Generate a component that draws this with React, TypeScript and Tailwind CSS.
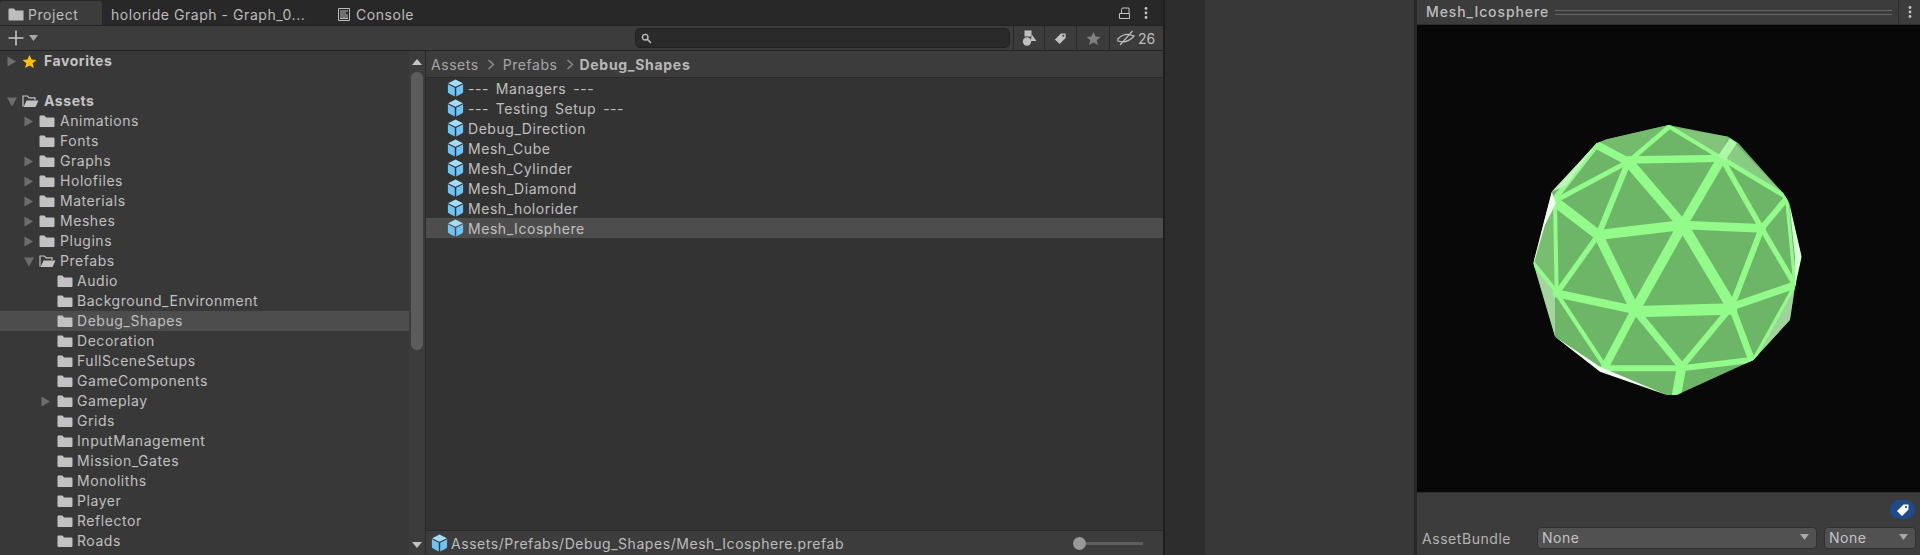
import React from "react";

const tree = [
  { name: "Favorites", depth: 0, arrow: "right", icon: "star", bold: true },
  { name: "", depth: 0, arrow: "", icon: "" },
  { name: "Assets", depth: 0, arrow: "down", icon: "open", bold: true },
  { name: "Animations", depth: 1, arrow: "right", icon: "folder" },
  { name: "Fonts", depth: 1, arrow: "", icon: "folder" },
  { name: "Graphs", depth: 1, arrow: "right", icon: "folder" },
  { name: "Holofiles", depth: 1, arrow: "right", icon: "folder" },
  { name: "Materials", depth: 1, arrow: "right", icon: "folder" },
  { name: "Meshes", depth: 1, arrow: "right", icon: "folder" },
  { name: "Plugins", depth: 1, arrow: "right", icon: "folder" },
  { name: "Prefabs", depth: 1, arrow: "down", icon: "open" },
  { name: "Audio", depth: 2, arrow: "", icon: "folder" },
  { name: "Background_Environment", depth: 2, arrow: "", icon: "folder" },
  { name: "Debug_Shapes", depth: 2, arrow: "", icon: "folder", selected: true },
  { name: "Decoration", depth: 2, arrow: "", icon: "folder" },
  { name: "FullSceneSetups", depth: 2, arrow: "", icon: "folder" },
  { name: "GameComponents", depth: 2, arrow: "", icon: "folder" },
  { name: "Gameplay", depth: 2, arrow: "right", icon: "folder" },
  { name: "Grids", depth: 2, arrow: "", icon: "folder" },
  { name: "InputManagement", depth: 2, arrow: "", icon: "folder" },
  { name: "Mission_Gates", depth: 2, arrow: "", icon: "folder" },
  { name: "Monoliths", depth: 2, arrow: "", icon: "folder" },
  { name: "Player", depth: 2, arrow: "", icon: "folder" },
  { name: "Reflector", depth: 2, arrow: "", icon: "folder" },
  { name: "Roads", depth: 2, arrow: "", icon: "folder" },
];

const prefabs = [
  "--- Managers ---",
  "--- Testing Setup ---",
  "Debug_Direction",
  "Mesh_Cube",
  "Mesh_Cylinder",
  "Mesh_Diamond",
  "Mesh_holorider",
  "Mesh_Icosphere",
];

const depthPad = ["pl-[7px]", "pl-[24px]", "pl-[41px]"];
const arrowCol = ["w-[15px]", "w-[15px]", "w-[16px]"];
const iconCol = ["w-[22px]", "w-[21px]", "w-[20px]"];

const FolderIcon = () => (
  <svg width="16" height="14" viewBox="0 0 16 14" className="shrink-0">
    <path d="M0.5 2.5 Q0.5 1.5 1.5 1.5 H5.5 L7 3.5 H14.5 Q15.5 3.5 15.5 4.5 V12 Q15.5 13 14.5 13 H1.5 Q0.5 13 0.5 12 Z" fill="#c2c2c2" />
  </svg>
);

const OpenFolderIcon = () => (
  <svg width="17" height="14" viewBox="0 0 17 14" className="shrink-0">
    <path d="M1 12.5 V2 H5.5 L7 3.8 H13 V6" fill="none" stroke="#c2c2c2" strokeWidth="1.2" />
    <path d="M1.5 13 L4.5 6.5 H16.5 L13.5 13 Z" fill="#c2c2c2" />
  </svg>
);

const StarIcon = ({ color = "#ffc107", size = 15 }: { color?: string; size?: number }) => (
  <svg width={size} height={size} viewBox="0 0 16 16" className="shrink-0">
    <path d="M8 1 L10.2 5.8 L15.4 6.3 L11.4 9.8 L12.7 15 L8 12.2 L3.3 15 L4.6 9.8 L0.6 6.3 L5.8 5.8 Z" fill={color} />
  </svg>
);

const CubeIcon = () => (
  <svg width="17" height="18" viewBox="0 0 16 17" className="shrink-0">
    <path d="M8 0.5 L15 4 L8 7.3 L1 4 Z" fill="#a5dcfb" />
    <path d="M0.8 5 L7.3 8.2 V16.5 L2 13.8 Q0.8 13.2 0.8 12 Z" fill="#6cc5f6" />
    <path d="M15.2 5 L8.7 8.2 V16.5 L14 13.8 Q15.2 13.2 15.2 12 Z" fill="#6cc5f6" />
  </svg>
);

const Arrow = ({ dir }: { dir: string }) => (
  <svg width="10" height="11" viewBox="0 0 10 11" className="shrink-0">
    {dir === "right" ? (
      <path d="M0.5 0.5 L9 5.5 L0.5 10.5 Z" fill="#6d6d6d" />
    ) : (
      <path d="M0 1.5 H10 L5 10.5 Z" fill="#6d6d6d" />
    )}
  </svg>
);

const TreeRow = ({ row }: { row: (typeof tree)[number] }) => (
  <div
    className={`flex h-5 shrink-0 items-center ${depthPad[row.depth]} ${row.selected ? "bg-[#4d4d4d]" : ""}`}
  >
    <div className={`flex shrink-0 ${arrowCol[row.depth]}`}>{row.arrow && <Arrow dir={row.arrow} />}</div>
    <div className={`flex shrink-0 ${iconCol[row.depth]}`}>
      {row.icon === "folder" && <FolderIcon />}
      {row.icon === "open" && <OpenFolderIcon />}
      {row.icon === "star" && <StarIcon />}
    </div>
    <span className={`pb-[2px] ${row.bold ? "font-bold text-[#c4c4c4]" : "text-[#c0c0c0]"}`}>{row.name}</span>
  </div>
);

const Sphere = () => {
  const edges: [number, number, number, number, number][] = [
    [508, 50, 385, 155, 14],
    [290, 105, 385, 155, 24],
    [385, 150, 665, 145, 22],
    [508, 50, 665, 145, 12],
    [385, 155, 170, 270, 15],
    [385, 155, 295, 375, 18],
    [385, 155, 548, 345, 30],
    [665, 145, 548, 345, 28],
    [665, 145, 785, 355, 16],
    [665, 145, 860, 262, 14],
    [860, 265, 785, 355, 18],
    [165, 275, 295, 375, 30],
    [295, 375, 548, 345, 30],
    [548, 345, 785, 355, 26],
    [785, 355, 885, 525, 16],
    [785, 355, 695, 590, 18],
    [170, 550, 295, 375, 16],
    [295, 375, 405, 600, 28],
    [548, 345, 405, 600, 30],
    [548, 345, 695, 590, 32],
    [170, 550, 405, 600, 24],
    [405, 605, 695, 597, 34],
    [695, 590, 885, 525, 22],
    [695, 590, 755, 750, 20],
    [695, 590, 545, 770, 18],
    [405, 600, 545, 770, 22],
    [405, 600, 315, 770, 24],
    [170, 550, 315, 770, 13],
    [310, 775, 545, 775, 18],
    [545, 775, 755, 750, 18],
    [545, 770, 530, 852, 28],
    [165, 270, 170, 550, 12],
    [290, 105, 165, 265, 16],
    [860, 265, 885, 525, 10],
    [100, 460, 170, 545, 12],
    [885, 525, 760, 750, 10],
  ];
  return (
    <svg width="330" height="300" viewBox="0 0 990 900" className="mt-[3px] mr-[7px] shrink-0">
      <defs>
        <clipPath id="hull">
          <polygon points="505,45 685,80 715,100 850,250 868,280 905,440 885,530 870,630 760,750 530,855 500,855 300,785 165,680 100,460 155,245 290,100 320,88" />
        </clipPath>
      </defs>
      <g clipPath="url(#hull)">
        <rect width="990" height="900" fill="#6db567" />
        <polygon points="290,100 320,88 505,45 385,150" fill="#74bb6d" />
        <polygon points="508,50 685,80 660,135" fill="#82c47c" />
        <polygon points="700,95 850,250 672,145" fill="#88cc82" />
        <polygon points="100,460 165,545 165,680" fill="#a3d69e" />
        <polygon points="885,530 870,630 760,750" fill="#9fd39a" />
        <polygon points="165,270 170,545 100,450" fill="#78be71" />
        {edges.map((e, i) => (
          <line key={i} x1={e[0]} y1={e[1]} x2={e[2]} y2={e[3]} stroke="#92fb8a" strokeWidth={e[4]} strokeLinecap="round" />
        ))}
        <line x1="665" y1="145" x2="700" y2="92" stroke="#aef7a7" strokeWidth="26" />
        <polygon points="155,245 100,445 100,465 135,345 168,280" fill="#f0fff0" />
        <polygon points="165,680 300,785 500,855 300,770" fill="#f5fff4" />
        <polygon points="868,280 905,440 885,530 885,440" fill="#dcfbd8" />
        <polygon points="155,245 290,100 200,225" fill="#bff5ba" />
      </g>
    </svg>
  );
};

const DropdownArrow = () => (
  <svg width="9" height="6" viewBox="0 0 9 6" className="shrink-0">
    <path d="M0 0 H9 L4.5 6 Z" fill="#a8a8a8" />
  </svg>
);

const TagIcon = ({ color, size = 13 }: { color: string; size?: number }) => (
  <svg width={size} height={size} viewBox="0 0 14 14" className="shrink-0">
    <path fillRule="evenodd" d="M1 8 L7.5 1.5 L12.5 1.5 L12.5 6.5 L6 13 Z M10 3 A1 1 0 1 0 10.01 3 Z" fill={color} />
  </svg>
);

const Dots = () => (
  <svg width="4" height="12" viewBox="0 0 4 12">
    <circle cx="2" cy="1.5" r="1.4" fill="#c4c4c4" />
    <circle cx="2" cy="6" r="1.4" fill="#c4c4c4" />
    <circle cx="2" cy="10.5" r="1.4" fill="#c4c4c4" />
  </svg>
);

const Chevron = () => (
  <svg width="8" height="11" viewBox="0 0 8 11" className="shrink-0">
    <path d="M1.5 1 L6.5 5.5 L1.5 10" fill="none" stroke="#8f8f8f" strokeWidth="1.4" />
  </svg>
);

const Select = ({ className }: { className: string }) => (
  <div
    className={`flex h-[22px] shrink-0 items-center justify-between rounded-[4px] border border-[#303030] bg-[#515151] pr-[7px] pb-[2px] pl-[4px] text-[#c4c4c4] ${className}`}
  >
    None
    <DropdownArrow />
  </div>
);

export default function App() {
  return (
    <div className="flex h-[555px] w-[1920px] overflow-hidden bg-[#383838] font-['Inter',sans-serif] text-[14px] tracking-[0.55px] text-[#c0c0c0]">
      {/* project window */}
      <div className="flex w-[1165px] shrink-0 flex-col border-r-2 border-[#1f1f1f]">
        <div className="flex h-[26px] shrink-0 items-end border-b border-[#232323] bg-[#282828] pt-[2px] text-[#bdbdbd]">
          <div className="flex h-[24px] w-[102px] items-center gap-[4px] rounded-t-[3px] bg-[#3c3c3c] pt-[2px] pl-2">
            <svg width="16" height="13" viewBox="0 0 16 13" className="shrink-0">
              <path d="M0.5 1.5 Q0.5 0.5 1.5 0.5 H6 L7.5 2.5 H15.5 V12.5 H1.5 Q0.5 12.5 0.5 11.5 Z" fill="#bdbdbd" />
            </svg>
            Project
          </div>
          <div className="flex h-[24px] w-[236px] items-center pt-[2px] pl-[9px]">holoride Graph - Graph_0...</div>
          <div className="flex h-[24px] items-center gap-[6px] pt-[2px]">
            <svg width="12" height="13" viewBox="0 0 12 13" className="shrink-0">
              <path d="M0.5 0.5 H11.5 V12.5 H0.5 Z" fill="none" stroke="#bdbdbd" />
              <path d="M2 3 H10 M2 5 H8 M2 7 H10 M2 9 H10 M2 10.5 H10" stroke="#bdbdbd" />
            </svg>
            Console
          </div>
          <div className="ml-auto flex h-[24px] items-center gap-[14px] pr-[15px]">
            <svg width="11" height="12" viewBox="0 0 11 12">
              <path d="M0.5 6.5 H10.5 V11.5 H0.5 Z M2.5 6 V2.5 Q2.5 1 4 1 H10 V6" fill="none" stroke="#c4c4c4" />
            </svg>
            <Dots />
          </div>
        </div>

        <div className="flex h-[25px] shrink-0 items-center border-b border-[#232323] bg-[#3c3c3c]">
          <div className="flex items-center gap-[5px] pl-[8px]">
            <svg width="16" height="16" viewBox="0 0 16 16">
              <path d="M8 0.5 V15.5 M0.5 8 H15.5" stroke="#c4c4c4" strokeWidth="1.6" />
            </svg>
            <DropdownArrow />
          </div>
          <div className="ml-[597px] flex h-[20px] w-[375px] items-center rounded-[5px] border border-[#212121] bg-[#2a2a2a] pl-[5px]">
            <svg width="11" height="11" viewBox="0 0 11 11">
              <circle cx="4.2" cy="4.2" r="2.8" fill="none" stroke="#bdbdbd" strokeWidth="1.4" />
              <path d="M6.5 6.5 L10 10" stroke="#bdbdbd" strokeWidth="1.6" />
            </svg>
          </div>
          <div className="ml-[3px] flex h-full w-[32px] items-center justify-center border-x border-[#2a2a2a]">
            <svg width="15" height="16" viewBox="0 0 15 16">
              <rect x="2.5" y="0.5" width="7" height="6" fill="#c0c0c0" />
              <circle cx="5" cy="11.5" r="4.2" fill="#c0c0c0" />
              <path d="M9.8 4.5 L14.5 11 H8.7 Z" fill="#c0c0c0" />
            </svg>
          </div>
          <div className="flex h-full w-[32px] items-center justify-center border-r border-[#2a2a2a]">
            <TagIcon color="#c0c0c0" />
          </div>
          <div className="flex h-full w-[33px] items-center justify-center border-r border-[#2a2a2a]">
            <StarIcon color="#808080" />
          </div>
          <div className="flex h-full flex-1 items-center gap-[3px] pl-[7px] tracking-normal text-[#bdbdbd]">
            <svg width="18" height="16" viewBox="0 0 18 16">
              <path d="M0.8 9 Q8 1.5 17 6 Q10 14 0.8 11 Z" fill="none" stroke="#bdbdbd" strokeWidth="1.2" />
              <path d="M3 15 L15.5 1" stroke="#bdbdbd" strokeWidth="1.2" />
            </svg>
            26
          </div>
        </div>

        <div className="flex min-h-0 flex-1">
          {/* folder tree */}
          <div className="flex w-[409px] shrink-0 flex-col overflow-hidden bg-[#383838]">
            {tree.map((row, i) => (
              <TreeRow key={i} row={row} />
            ))}
          </div>
          <div className="flex w-[17px] shrink-0 flex-col items-center border-r border-[#2a2a2a] bg-[#3c3c3c] pr-[1px]">
            <svg width="10" height="6" viewBox="0 0 10 6" className="mt-[8px] shrink-0">
              <path d="M5 0 L10 6 H0 Z" fill="#c4c4c4" />
            </svg>
            <div className="mt-[7px] h-[278px] w-[12px] shrink-0 rounded-[6px] bg-[#5c5c5c]" />
            <svg width="10" height="6" viewBox="0 0 10 6" className="mt-auto mb-[7px] shrink-0">
              <path d="M0 0 H10 L5 6 Z" fill="#c4c4c4" />
            </svg>
          </div>

          {/* asset list */}
          <div className="flex min-w-0 flex-1 flex-col bg-[#333333]">
            <div className="flex h-[27px] shrink-0 items-center gap-[8px] border-b border-[#2a2a2a] bg-[#3c3c3c] pl-[5px] text-[#a6a6a6]">
              <span>Assets</span>
              <Chevron />
              <span>Prefabs</span>
              <Chevron />
              <span className="-ml-[2px] font-bold tracking-[0.7px] text-[#b8b8b8]">Debug_Shapes</span>
            </div>
            <div className="flex flex-1 flex-col [word-spacing:2.4px]">
              {prefabs.map((name) => (
                <div
                  key={name}
                  className={`flex h-5 items-center gap-[4px] pl-[21px] ${name === "Mesh_Icosphere" ? "bg-[#4d4d4d]" : ""}`}
                >
                  <CubeIcon />
                  <span>{name}</span>
                </div>
              ))}
            </div>
            <div className="flex h-[25px] shrink-0 items-center gap-[3px] border-t border-[#2a2a2a] bg-[#3c3c3c] pl-[5px] text-[#bdbdbd]">
              <CubeIcon />
              <span>Assets/Prefabs/Debug_Shapes/Mesh_Icosphere.prefab</span>
              <div className="mr-[20px] ml-auto flex items-center">
                <div className="h-[13px] w-[13px] rounded-full bg-[#999999]" />
                <div className="h-[3px] w-[57px] bg-[#5e5e5e]" />
              </div>
            </div>
          </div>
        </div>
      </div>

      {/* empty docked area */}
      <div className="w-[40px] shrink-0 bg-[#2d2d2d]" />
      <div className="flex-1" />

      {/* inspector preview */}
      <div className="flex w-[506px] shrink-0 flex-col border-l-[3px] border-[#282828] bg-[#3c3c3c]">
        <div className="flex h-[25px] shrink-0 items-center border-b border-[#2c2c2c] pl-[9px]">
          <span className="pb-[1px] font-medium tracking-[0.9px] text-[#bdbdbd]">Mesh_Icosphere</span>
          <div className="mx-[6px] h-[5px] flex-1 border-y border-[#666666]" />
          <div className="flex h-[22px] w-[22px] items-center justify-center border-l border-[#2c2c2c]">
            <Dots />
          </div>
        </div>
        <div className="flex h-[467px] shrink-0 items-center justify-center bg-[#080808]">
          <Sphere />
        </div>
        <div className="flex flex-1 flex-col border-t border-[#2c2c2c]">
          <div className="mt-[7px] mr-[5px] flex h-[19px] w-[25px] items-center justify-center self-end rounded-full bg-[#1f4a8c]">
            <TagIcon color="#ffffff" size={14} />
          </div>
          <div className="mt-[8px] flex items-center pr-[5px] pl-[5px]">
            <span className="w-[115px] shrink-0 text-[#b4b4b4]">AssetBundle</span>
            <Select className="w-[280px]" />
            <Select className="ml-[7px] w-[92px]" />
          </div>
        </div>
      </div>
    </div>
  );
}
